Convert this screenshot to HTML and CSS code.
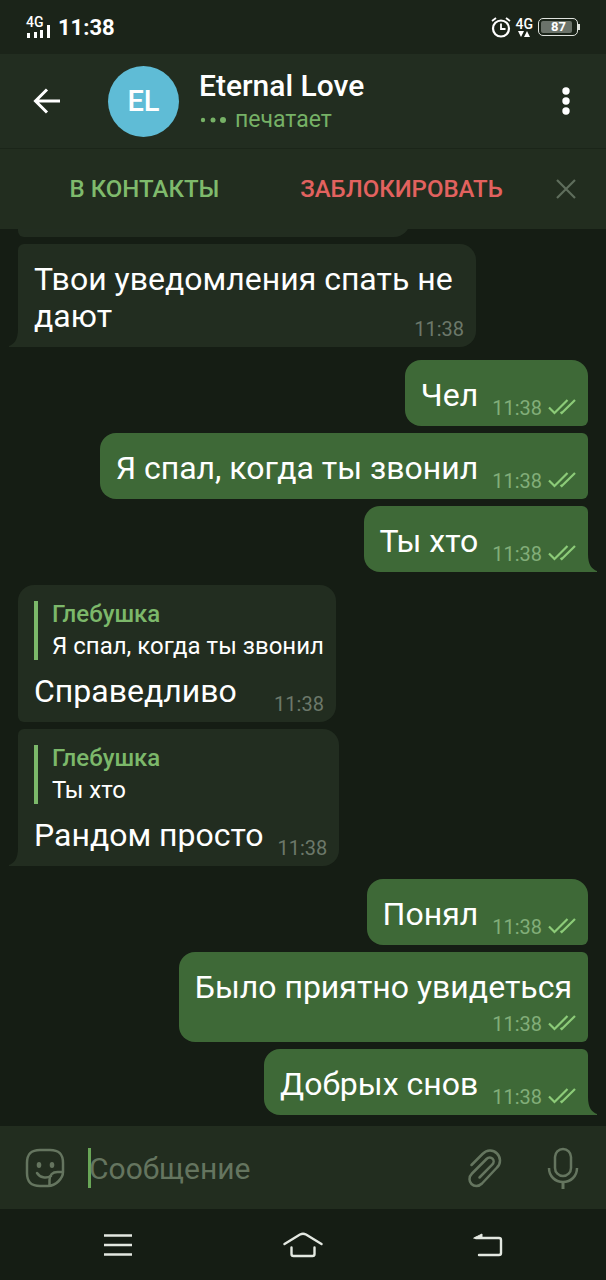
FILE: index.html
```html
<!DOCTYPE html>
<html lang="ru">
<head>
<meta charset="utf-8">
<meta name="viewport" content="width=device-width, initial-scale=1">
<title>Eternal Love</title>
<link rel="stylesheet" href="styles.css">
</head>
<body>
<svg class="defs" aria-hidden="true">
  <symbol id="checks" viewBox="0 0 28 16"><path d="M1 8.500l5.500 5.500L19.500 1M12.500 13l1.200 1L27 1" fill="none" stroke="currentColor" stroke-width="2.200"/></symbol>
  <symbol id="tail" viewBox="0 0 10 18"><path d="M0 0v18h9v-1C4 15 0 11 0 0z" fill="currentColor"/></symbol>
</svg>
<div class="phone">
  <div class="status">
    <div class="signal">
      <span class="net">4G</span>
      <svg width="26" height="14" viewBox="0 0 26 14" fill="#fff"><path d="M1 9h3v5H1zM8 8h3v6H8zM14 6h3v8h-3zM21 1h3v13h-3z"/></svg>
    </div>
    <span class="clock">11:38</span>
    <div class="status-right">
      <svg width="20" height="21" viewBox="0 0 20 21" fill="none" stroke="#fff"><circle cx="10" cy="11.500" r="8" stroke-width="2.200"/><path d="M10 6.500v5.500h4.500" stroke-width="1.800"/><path d="M1 4L5 1M19 4L15 1" stroke-width="1.800"/></svg>
      <div class="data">
        <span class="net">4G</span>
        <svg width="12" height="6" viewBox="0 0 12 6" fill="#fff"><path d="M0 0h6L3 6zM6 6h6L9 0z"/></svg>
      </div>
      <div class="battery"><span class="level">87</span></div>
    </div>
  </div>

  <header class="header">
    <button class="icon-btn back" aria-label="Назад"><svg width="28" height="26" viewBox="0 0 28 26" fill="none" stroke="#fff" stroke-width="3"><path d="M27 13H3M14 1.500L2.500 13 14 24.500"/></svg></button>
    <div class="avatar">EL</div>
    <div class="who">
      <h1 class="title">Eternal Love</h1>
      <p class="typing"><svg width="27" height="8" viewBox="0 0 27 8" fill="currentColor"><circle cx="4" cy="4" r="2.200"/><circle cx="14" cy="4" r="2.500"/><circle cx="24" cy="4" r="3"/></svg>печатает</p>
    </div>
    <button class="icon-btn menu" aria-label="Меню"><svg width="8" height="28" viewBox="0 0 8 28" fill="#fff"><circle cx="4" cy="4" r="3.700"/><circle cx="4" cy="14" r="3.700"/><circle cx="4" cy="24" r="3.700"/></svg></button>
  </header>

  <div class="actions">
    <button class="action add">В КОНТАКТЫ</button>
    <button class="action block">ЗАБЛОКИРОВАТЬ</button>
    <button class="action close" aria-label="Закрыть"><svg width="20" height="20" viewBox="0 0 20 20" fill="none" stroke="currentColor" stroke-width="2.200"><path d="M1 1l18 18M19 1L1 19"/></svg></button>
  </div>

  <main class="chat">
    <div class="group in">
      <div class="bubble clipped"></div>
      <div class="bubble multi last">
        <p class="text">Твои уведомления спать не дают<span class="meta"><time>11:38</time></span></p>
        <svg class="tail"><use href="#tail"/></svg>
      </div>
    </div>
    <div class="group out">
      <div class="bubble first"><p class="text">Чел</p><div class="meta"><time>11:38</time><svg class="checks"><use href="#checks"/></svg></div></div>
      <div class="bubble"><p class="text">Я спал, когда ты звонил</p><div class="meta"><time>11:38</time><svg class="checks"><use href="#checks"/></svg></div></div>
      <div class="bubble last"><p class="text">Ты хто</p><div class="meta"><time>11:38</time><svg class="checks"><use href="#checks"/></svg></div><svg class="tail"><use href="#tail"/></svg></div>
    </div>
    <div class="group in">
      <div class="bubble reply first">
        <blockquote class="quote"><cite class="author">Глебушка</cite><span>Я спал, когда ты звонил</span></blockquote>
        <div class="row"><p class="text">Справедливо</p><div class="meta"><time>11:38</time></div></div>
      </div>
      <div class="bubble reply last">
        <blockquote class="quote"><cite class="author">Глебушка</cite><span>Ты хто</span></blockquote>
        <div class="row"><p class="text">Рандом просто</p><div class="meta"><time>11:38</time></div></div>
        <svg class="tail"><use href="#tail"/></svg>
      </div>
    </div>
    <div class="group out">
      <div class="bubble first"><p class="text">Понял</p><div class="meta"><time>11:38</time><svg class="checks"><use href="#checks"/></svg></div></div>
      <div class="bubble stacked"><p class="text">Было приятно увидеться</p><div class="meta"><time>11:38</time><svg class="checks"><use href="#checks"/></svg></div></div>
      <div class="bubble last"><p class="text">Добрых снов</p><div class="meta"><time>11:38</time><svg class="checks"><use href="#checks"/></svg></div><svg class="tail"><use href="#tail"/></svg></div>
    </div>
  </main>

  <form class="composer">
    <button type="button" class="icon-btn" aria-label="Стикеры"><svg width="40" height="40" viewBox="0 0 40 40" fill="none" stroke="currentColor" stroke-width="2.500"><path d="M23 38H15C6 38 2 34 2 25V15C2 6 6 2 15 2h10c9 0 13 4 13 13v9C38 30 31 38 23 38z"/><path d="M24.500 37.500V32c0-5 3-8 8-8h5"/><path d="M12 25c3 4.500 9 6 14 3" stroke-linecap="round"/><g fill="currentColor" stroke="none"><ellipse cx="14" cy="17" rx="2.300" ry="3"/><ellipse cx="27" cy="17" rx="2.300" ry="3"/></g></svg></button>
    <span class="caret"></span>
    <input class="field" type="text" placeholder="Сообщение" aria-label="Сообщение">
    <button type="button" class="icon-btn clip" aria-label="Прикрепить"><svg width="36" height="40" viewBox="0 0 36 40" fill="none" stroke="currentColor" stroke-width="2.500" stroke-linecap="round"><path d="M4.500 17L15.500 6c4.500-4.500 10.500-4.500 14.500-.5s4 10 0 14L15 35.500c-3.500 3.500-8 3-10.500.5s-3-7 .5-10.500L19.500 11c2-2 4.500-1.800 6-.3s1.700 4-.3 6L12.500 29.500"/></svg></button>
    <button type="button" class="icon-btn mic" aria-label="Голосовое сообщение"><svg width="32" height="42" viewBox="0 0 32 42" fill="none" stroke="currentColor" stroke-width="2.500"><rect x="8" y="2" width="16" height="27" rx="8"/><path d="M2 21c0 8 6 14 14 14s14-6 14-14"/><path d="M16 35v7" stroke-width="3"/></svg></button>
  </form>

  <nav class="nav">
    <button class="icon-btn" aria-label="Недавние"><svg width="28" height="22" viewBox="0 0 28 22" stroke="currentColor" stroke-width="2.400"><path d="M0 1.500h28M0 11h28M0 20.500h28"/></svg></button>
    <button class="icon-btn" aria-label="Домой"><svg width="40" height="26" viewBox="0 0 40 26" fill="none" stroke="currentColor" stroke-width="2.400" stroke-linecap="round" stroke-linejoin="round"><path d="M1.500 12L17 2.500q3-1.500 6 0L38.500 12M8.500 15.500V22q0 2 2 2h19q2 0 2-2v-6.500"/></svg></button>
    <button class="icon-btn" aria-label="Назад"><svg width="30" height="24" viewBox="0 0 30 24" fill="none" stroke="currentColor" stroke-width="2.400" stroke-linecap="round"><path d="M3 5h23q2 0 2 2v13q0 2-2 2H6"/><path d="M1 5l8-4v4z" fill="currentColor" stroke-width="1"/></svg></button>
  </nav>
</div>
</body>
</html>
```
FILE: styles.css
```css
* { box-sizing: border-box; }
body {
  margin: 0;
  background: #151d14;
  color: #fff;
  font-family: Roboto, "Noto Sans", sans-serif;
}
h1, p, blockquote { margin: 0; }
button {
  border: 0;
  padding: 0;
  background: none;
  color: inherit;
  font: inherit;
}
svg { display: block; flex: none; }
.defs { display: none; }

.phone { display: flex; flex-direction: column; height: 100vh; overflow: hidden; }

.status {
  display: flex;
  align-items: center;
  height: 54px;
  flex: none;
  padding: 0 28px 0 26px;
  background: #1b2419;
}
.signal { display: flex; flex-direction: column; margin-right: 6px; }
.net { font-size: 14px; font-weight: 500; line-height: 12px; }
.signal .net { margin-bottom: -4px; }
.clock { font-size: 22px; font-weight: 700; line-height: 26px; padding-top: 2px; }
.status-right { display: flex; align-items: center; gap: 5px; margin-left: auto; }
.data { display: flex; flex-direction: column; align-items: center; gap: 1px; }
.battery {
  position: relative;
  width: 40px;
  height: 18px;
  padding: 2px;
  border: 1px solid #dfe3de;
  border-radius: 5px;
}
.battery::after {
  content: "";
  position: absolute;
  right: -3px;
  top: 5px;
  width: 2px;
  height: 6px;
  background: #dfe3de;
}
.level {
  display: block;
  width: 31px;
  padding-left: 4px;
  border-radius: 2px;
  background: #6b736a;
  font-size: 13px;
  font-weight: 700;
  line-height: 12px;
  text-align: center;
}

.header {
  display: flex;
  align-items: center;
  flex: none;
  height: 95px;
  padding: 0 36px 0 33px;
  background: #222d20;
  border-bottom: 1px solid #1b2519;
}
.avatar {
  display: grid;
  place-items: center;
  width: 71px;
  height: 71px;
  margin: 0 20px 0 47px;
  border-radius: 50%;
  background: #5fbcd6;
  font-size: 29px;
  font-weight: 500;
}
.who { flex: 1; min-width: 0; padding-top: 2px; }
.title { font-size: 30px; font-weight: 500; line-height: 36px; }
.typing {
  display: flex;
  align-items: center;
  gap: 9px;
  color: #76b166;
  font-size: 23px;
  line-height: 32px;
}

.actions {
  display: flex;
  flex: none;
  height: 80px;
  padding: 0 4px 0 16px;
  background: #222d1f;
}
.action { flex: 1; font-size: 24px; font-weight: 500; }
.add { color: #7fba6c; }
.block { color: #e2625f; }
.close { display: grid; place-items: center; flex: 0 0 72px; color: #5f6d5c; }

.chat {
  display: flex;
  flex: 1;
  flex-direction: column;
  justify-content: flex-end;
  gap: 13px;
  min-height: 0;
  overflow: hidden;
  padding: 0 18px 11px;
}
.group { display: flex; flex-direction: column; gap: 7px; }
.in { align-items: flex-start; color: #222d20; }
.out { align-items: flex-end; color: #3e6937; }
.bubble {
  position: relative;
  display: flex;
  align-items: flex-end;
  column-gap: 14px;
  max-width: 90%;
  padding: 17px 12px 12px 16px;
  background: currentColor;
}
.in .bubble { border-radius: 6px 16px 16px 6px; }
.out .bubble { border-radius: 16px 6px 6px 16px; }
.in .first { border-top-left-radius: 16px; }
.out .first { border-top-right-radius: 16px; }
.in .last { border-bottom-left-radius: 0; }
.out .last { border-bottom-right-radius: 0; }
.clipped { width: 392px; height: 66px; }
.multi { max-width: 458px; }
.multi .meta { float: right; margin-top: 13px; }
.stacked { flex-direction: column; }
.stacked .text { padding-right: 4px; }
.reply { flex-direction: column; align-items: stretch; }
.row { display: flex; align-items: flex-end; justify-content: space-between; gap: 14px; }
.text { color: #fff; font-size: 32px; line-height: 37px; }
.meta {
  display: flex;
  align-items: flex-end;
  gap: 6px;
  height: 30px;
  margin: 0 0 -6px auto;
  color: #6c786a;
  font-size: 20px;
  line-height: 24px;
}
.out .meta { color: #82ae79; }
.checks { width: 28px; height: 16px; margin-bottom: 5px; color: #8ccb78; }
.tail { position: absolute; bottom: 0; width: 10px; height: 18px; }
.out .tail { left: 100%; }
.in .tail { right: 100%; transform: scaleX(-1); }
.quote {
  display: flex;
  flex-direction: column;
  gap: 5px;
  margin: -1px 0 13px;
  padding-left: 14px;
  border-left: 4px solid #7cb86a;
  color: #fff;
  font-size: 24px;
  line-height: 27px;
}
.author { color: #7cb86a; font-style: normal; font-weight: 500; }

.composer {
  display: flex;
  align-items: center;
  flex: none;
  height: 83px;
  padding: 0 27px 0 25px;
  background: #222d1f;
  color: #65755f;
}
.caret { width: 3px; height: 40px; margin-left: 23px; background: #69a657; }
.field {
  flex: 1;
  min-width: 0;
  margin-left: -2px;
  padding: 2px 0 0;
  border: 0;
  outline: 0;
  background: none;
  color: #fff;
  font: 30px/40px Roboto, "Noto Sans", sans-serif;
}
.field::placeholder { color: #65755f; opacity: 1; }
.mic { margin-left: 44px; }

.nav {
  display: flex;
  align-items: center;
  justify-content: space-between;
  flex: none;
  height: 71px;
  padding: 0 103px 0 104px;
  color: #e3e8e1;
}
```
